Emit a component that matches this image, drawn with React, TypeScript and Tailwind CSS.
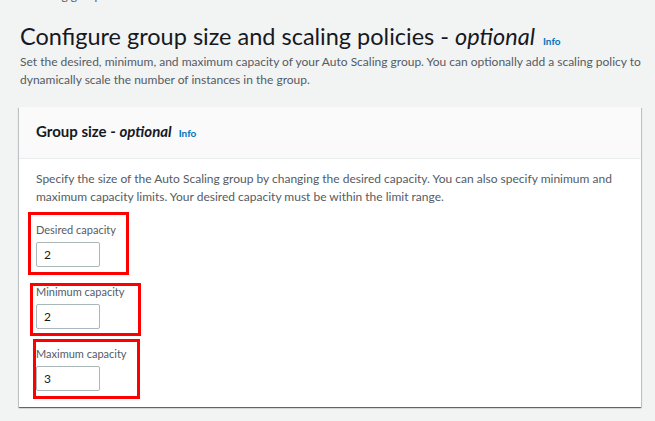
import React, { FC } from "react"

interface FieldProps {
    label: string
    value: string
    box: string
}

const Field: FC<FieldProps> = ({ label, value, box }) => {
    return (
        <div className="relative w-[64px]">
            <div className="text-[11px] leading-[16px] text-[#545b64] whitespace-nowrap mb-[4px]">{label}</div>
            <div className="h-[25px] w-[64px] border border-[#aab7b8] rounded-[2px] bg-white flex items-center pl-[7px] text-[12px] text-[#16191f]">
                {value}
            </div>
            {/* annotation drawn over the screenshot */}
            <div className={`absolute border-[3px] border-[#f00] pointer-events-none ${box}`} />
        </div>
    )
}

const InfoLink: FC<{ className?: string }> = ({ className }) => (
    <span className={`text-[10px] font-bold text-[#0073bb] ${className ?? ""}`}>Info</span>
)

const App: FC = () => {
    return (
        <div className="w-[655px] h-[421px] overflow-hidden bg-[#f2f3f3] font-['Lato',sans-serif]">
            <div className="text-[12px] leading-[16px] text-[#545b64] -mt-[12px] pl-[2px]">Auto Scaling group</div>

            <div className="pl-[20px] pr-[10px] mt-[16px]">
                <h1 className="flex items-baseline h-[32px] text-[23.5px] leading-[32px] text-[#16191f] whitespace-nowrap">
                    <span>Configure group size and scaling policies - <i>optional</i></span>
                    <InfoLink className="ml-[8px]" />
                </h1>
                <p className="mt-[1px] text-[12px] leading-[18px] text-[#545b64]">
                    Set the desired, minimum, and maximum capacity of your Auto Scaling group. You can optionally add a scaling policy to dynamically scale the number of instances in the group.
                </p>
            </div>

            <div className="mt-[18px] ml-[19px] w-[622px] bg-white shadow-[0_1px_1px_0_rgba(0,28,36,0.5),1px_1px_1px_0_rgba(0,28,36,0.15),-1px_1px_1px_0_rgba(0,28,36,0.15)]">
                <div className="h-[52px] bg-[#fafafa] border-b border-[#eaeded] px-[17px] pt-[14px]">
                    <h2 className="flex items-baseline h-[20px] text-[15px] leading-[20px] font-bold text-[#16191f]">
                        <span>Group size - <i>optional</i></span>
                        <InfoLink className="ml-[7px]" />
                    </h2>
                </div>
                <div className="px-[17px] pt-[11px] pb-[16px]">
                    <p className="text-[12px] leading-[18px] text-[#545b64]">
                        Specify the size of the Auto Scaling group by changing the desired capacity. You can also specify minimum and maximum capacity limits. Your desired capacity must be within the limit range.
                    </p>
                    <div className="mt-[16px] flex flex-col gap-[17px]">
                        <Field label="Desired capacity" value="2" box="-left-[8px] -top-[10px] w-[101px] h-[63px]" />
                        <Field label="Minimum capacity" value="2" box="-left-[6px] -top-[1px] w-[111px] h-[53px]" />
                        <Field label="Maximum capacity" value="3" box="-left-[3px] -top-[7px] w-[107px] h-[60px]" />
                    </div>
                </div>
            </div>
        </div>
    )
}

export default App
